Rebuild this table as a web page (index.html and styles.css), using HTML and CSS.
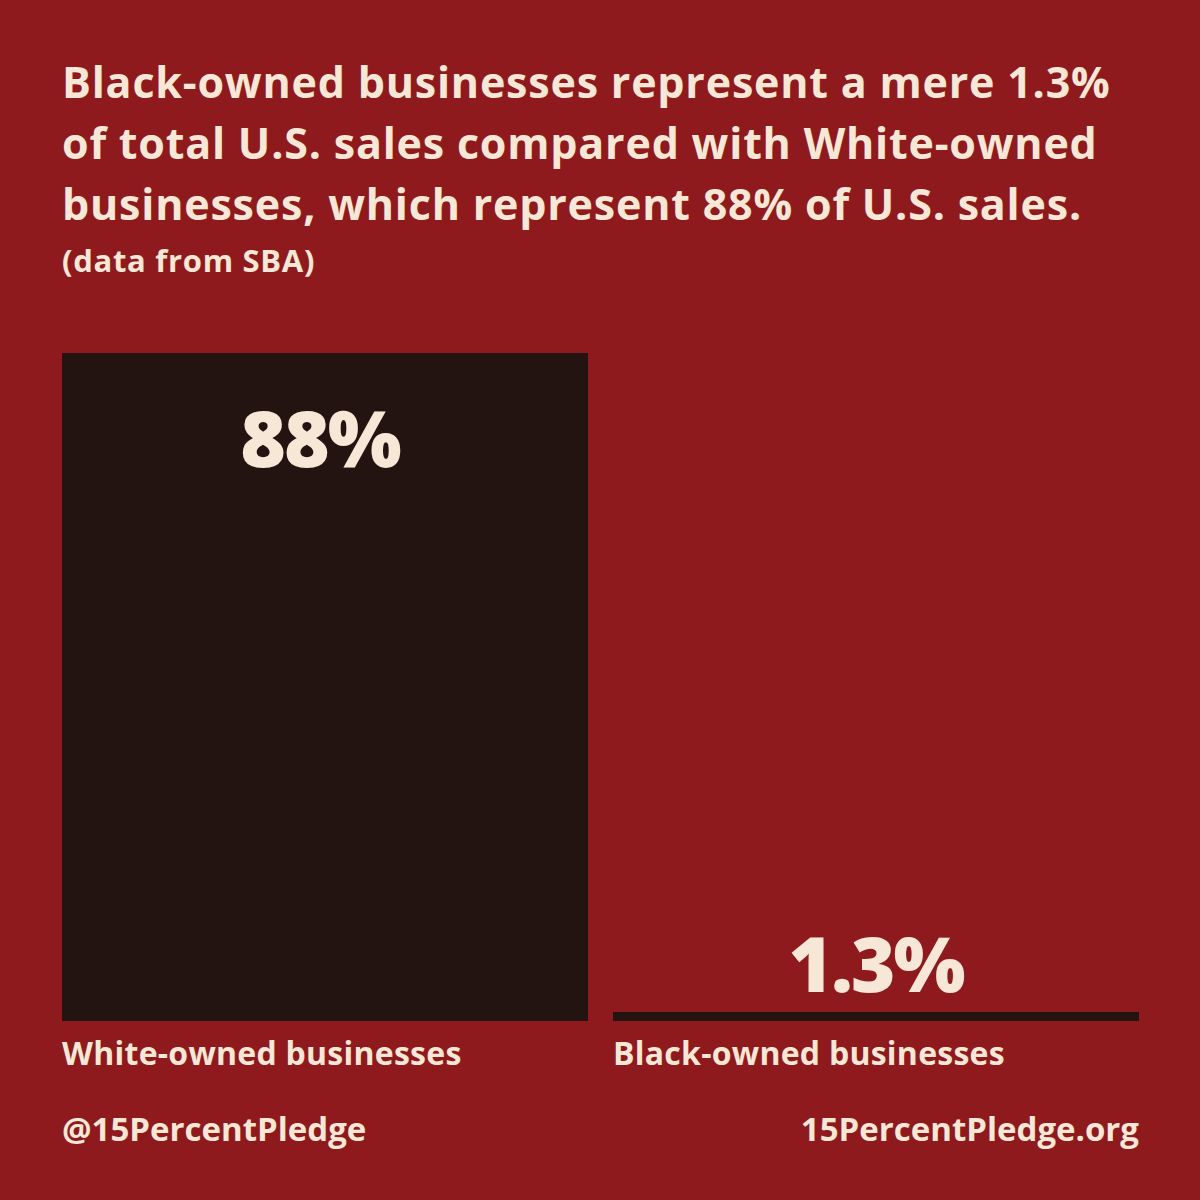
FILE: index.html
```html
<!DOCTYPE html>
<html lang="en">
<head>
<meta charset="utf-8">
<title>15 Percent Pledge</title>
<link rel="stylesheet" href="styles.css">
</head>
<body>
<main class="card">
  <header class="head">
    <h1 class="title">Black-owned businesses represent a mere 1.3%<br>of total U.S. sales compared with White-owned<br>businesses, which represent 88% of U.S. sales.</h1>
    <p class="source">(data from SBA)</p>
  </header>
  <section class="chart">
    <div class="col">
      <div class="bar bar-big"><span class="value">88%</span></div>
      <div class="label">White-owned businesses</div>
    </div>
    <div class="col">
      <div class="stack">
        <span class="value value-small">1.3%</span>
        <div class="bar bar-thin"></div>
      </div>
      <div class="label">Black-owned businesses</div>
    </div>
  </section>
  <footer class="foot">
    <span>@15PercentPledge</span>
    <span>15PercentPledge.org</span>
  </footer>
</main>
</body>
</html>
```
FILE: styles.css
```css
html, body {
  margin: 0;
  padding: 0;
  background: #8f1a1d;
}
.card {
  width: 1200px;
  height: 1200px;
  box-sizing: border-box;
  padding: 51px 61px 0 62px;
  background: #8f1a1d;
  color: #f7e7d7;
  font-family: "Open Sans", Lato, sans-serif;
  font-weight: 700;
  display: flex;
  flex-direction: column;
}
.title {
  margin: 0;
  font-size: 43px;
  line-height: 61px;
  font-weight: 700;
  letter-spacing: 0.8px;
  white-space: nowrap;
}
.source {
  margin: 6px 0 0;
  font-size: 31px;
  line-height: 40px;
  letter-spacing: 0.7px;
}
.chart {
  margin-top: 73px;
  display: grid;
  grid-template-columns: 526px 526px;
  column-gap: 25px;
}
.col {
  display: flex;
  flex-direction: column;
}
.stack {
  height: 668px;
  display: flex;
  flex-direction: column;
  justify-content: flex-end;
  align-items: center;
}
.bar {
  background: #231311;
  width: 100%;
}
.bar-big {
  height: 668px;
  display: flex;
  justify-content: center;
  box-sizing: border-box;
  padding-top: 45px;
}
.bar-thin {
  height: 9px;
  margin-top: 11px;
}
.value {
  font-size: 78px;
  line-height: 1;
  font-weight: 800;
  letter-spacing: -2px;
  margin-left: -10px;
}
.value-small {
  font-size: 76px;
  margin-left: 0;
}
.label {
  margin-top: 12px;
  font-size: 32px;
  line-height: 40px;
  letter-spacing: 0.25px;
}
.foot {
  margin-top: 36px;
  display: flex;
  justify-content: space-between;
  font-size: 33px;
  line-height: 40px;
}
```
